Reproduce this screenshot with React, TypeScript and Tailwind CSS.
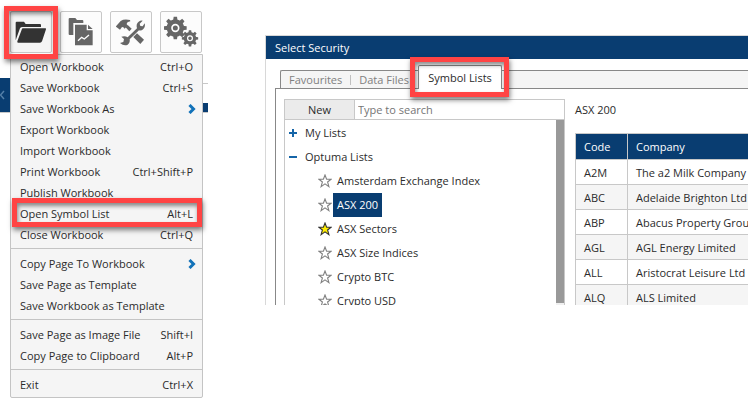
import { useState } from 'react'
import type { ReactNode } from 'react'

interface MenuEntry {
  label: string
  shortcut?: string
  submenu?: boolean
  marked?: boolean
}

const menuGroups: MenuEntry[][] = [
  [
    { label: 'Open Workbook', shortcut: 'Ctrl+O' },
    { label: 'Save Workbook', shortcut: 'Ctrl+S' },
    { label: 'Save Workbook As', submenu: true },
    { label: 'Export Workbook' },
    { label: 'Import Workbook' },
    { label: 'Print Workbook', shortcut: 'Ctrl+Shift+P' },
    { label: 'Publish Workbook' },
    { label: 'Open Symbol List', shortcut: 'Alt+L', marked: true },
    { label: 'Close Workbook', shortcut: 'Ctrl+Q' },
  ],
  [
    { label: 'Copy Page To Workbook', submenu: true },
    { label: 'Save Page as Template' },
    { label: 'Save Workbook as Template' },
  ],
  [
    { label: 'Save Page as Image File', shortcut: 'Shift+I' },
    { label: 'Copy Page to Clipboard', shortcut: 'Alt+P' },
  ],
  [{ label: 'Exit', shortcut: 'Ctrl+X' }],
]

const symbolLists = [
  { name: 'Amsterdam Exchange Index', starred: false },
  { name: 'ASX 200', starred: false },
  { name: 'ASX Sectors', starred: true },
  { name: 'ASX Size Indices', starred: false },
  { name: 'Crypto BTC', starred: false },
  { name: 'Crypto USD', starred: false },
]

const securities = [
  ['A2M', 'The a2 Milk Company'],
  ['ABC', 'Adelaide Brighton Ltd'],
  ['ABP', 'Abacus Property Group'],
  ['AGL', 'AGL Energy Limited'],
  ['ALL', 'Aristocrat Leisure Ltd'],
  ['ALQ', 'ALS Limited'],
]

// Red callout frame, placed over whatever it points at
function Callout({ className }: { className: string }) {
  return (
    <span
      className={`pointer-events-none absolute z-20 border-5 border-[#ff4444] shadow-[1px_3px_5px_rgba(0,0,0,0.5),inset_1px_3px_4px_rgba(0,0,0,0.45)] ${className}`}
    />
  )
}

function FolderIcon() {
  return (
    <svg viewBox="3 3 120 120" className="size-10" fill="#333">
      <path d="M17 35Q17 32 20 32H42L47 39H90Q93 39 93 42V48H38Q32 48 30 52L17 88Z" />
      <path d="M39 52H106Q109 52 108 55L96 91Q94 95 90 95H24Q21 95 22 91L35 56Q36 52 39 52Z" />
    </svg>
  )
}

function PagesIcon() {
  return (
    <svg viewBox="3 3 120 120" className="size-10" fill="#666">
      <path d="M26 24Q26 21 29 21H46L51 27H67Q70 27 70 30V36H40V72H29Q26 72 26 69Z" />
      <path d="M45 41H80V58H98V103H45Z" />
      <path d="M84 41L98 54H84Z" />
      <path d="M54 89L65 79L73 84L87 72" fill="none" stroke="#fff" strokeWidth="4" />
    </svg>
  )
}

function ToolsIcon() {
  return (
    <svg viewBox="3 3 120 120" className="size-10" fill="#666">
      <path d="M18 46L32 30Q42 23 60 27L61 31Q50 33 50 40L53 43L44 53L40 49L36 48L30 56L18 47Z" />
      <path d="M46 48L53 42L65 53L58 61Z" />
      <path d="M70 78L81 67L102 86L91 99Z" />
      <path d="M30 96L40 93L42 84L34 77Q45 73 53 79L81 52Q77 39 86 32Q92 27 98 29L89 38L91 45L98 46L104 37Q107 47 100 54Q94 60 87 58L59 85Q61 95 53 101Q42 106 30 96Z" />
    </svg>
  )
}

function Gear({ x, y, scale }: { x: number; y: number; scale: number }) {
  return (
    <g transform={`translate(${x} ${y}) scale(${scale})`}>
      {[0, 45, 90, 135, 180, 225, 270, 315].map((angle) => (
        <path key={angle} d="M-7 -20L-5 -34H5L7 -20Z" transform={`rotate(${angle})`} />
      ))}
      <circle r="26" />
      <circle r="10" fill="#666" stroke="#fff" strokeWidth="5" />
    </g>
  )
}

function GearsIcon() {
  return (
    <svg viewBox="3 3 120 120" className="size-10" fill="#666">
      <Gear x={46} y={51} scale={1} />
      <Gear x={90} y={82} scale={0.72} />
    </svg>
  )
}

function StarIcon({ filled }: { filled: boolean }) {
  return (
    <svg viewBox="0 0 14 14" className="size-3.5 shrink-0">
      <path
        d="M7 1L8.6 5.2H13.1L9.6 8L10.9 12.6L7 9.9L3.1 12.6L4.4 8L0.9 5.2H5.4Z"
        fill={filled ? '#ffee00' : '#fff'}
        stroke={filled ? '#333' : '#808080'}
        strokeWidth="1.1"
      />
    </svg>
  )
}

function ToolButton({ label, active, children }: { label: string; active?: boolean; children: ReactNode }) {
  return (
    <span className="relative">
      <button
        aria-label={label}
        className={`block rounded-[2px] border border-[#c8c8c8] ${
          active ? 'bg-[#f5f5f5]' : 'bg-[#fcfcfc]'
        }`}
      >
        {children}
      </button>
      {active && <Callout className="-top-[5px] -right-[6px] -bottom-[6px] -left-[6px]" />}
    </span>
  )
}

function FileMenu() {
  return (
    <div
      role="menu"
      className="absolute top-[54px] right-[5px] left-[10px] rounded-b-[2px] border border-[#c4c4c4] bg-[#f5f5f5] pt-px pb-0.5"
    >
      {menuGroups.map((group, index) => (
        <div key={index} className={index > 0 ? 'mt-[3px] border-t border-[#c4c4c4] pt-1' : ''}>
          {group.map((entry) => (
            <div key={entry.label} className="relative">
              <button
                role="menuitem"
                className="flex h-[21px] w-full items-center justify-between px-[9px] whitespace-nowrap"
              >
                <span>{entry.label}</span>
                {entry.shortcut && <span>{entry.shortcut}</span>}
                {entry.submenu && (
                  <svg viewBox="0 0 8 10" className="-mr-[3px] h-2.5 w-2" fill="none">
                    <path d="M1.5 1L5.5 5L1.5 9" stroke="#1272b9" strokeWidth="3" />
                  </svg>
                )}
              </button>
              {entry.marked && <Callout className="-top-[5px] right-0 -bottom-[3px] left-px" />}
            </div>
          ))}
        </div>
      ))}
    </div>
  )
}

function SymbolTree() {
  const [selected, setSelected] = useState('ASX 200')

  return (
    <div className="flex w-[281px] shrink-0 flex-col border-x border-t border-[#c8c8c8]">
      <div className="flex h-5 shrink-0 border-b border-[#c8c8c8]">
        <button className="w-[70px] shrink-0 border-r border-[#c8c8c8] bg-[#ebebeb]">New</button>
        <input
          aria-label="Type to search"
          placeholder="Type to search"
          className="min-w-0 flex-1 px-[3px] outline-none placeholder:text-[#757575]"
        />
      </div>
      <div className="flex min-h-0 flex-1">
        <div className="flex-1 pt-px">
          <button className="flex h-6 items-center gap-2 pl-1">
            <svg viewBox="0 0 8 8" className="size-2">
              <path d="M4 0V8M0 4H8" stroke="#1565a8" strokeWidth="2" />
            </svg>
            My Lists
          </button>
          <button className="flex h-6 items-center gap-2 pl-1">
            <svg viewBox="0 0 8 8" className="size-2">
              <path d="M0 4H8" stroke="#1565a8" strokeWidth="2" />
            </svg>
            Optuma Lists
          </button>
          {symbolLists.map((list) => (
            <button
              key={list.name}
              onClick={() => setSelected(list.name)}
              className="flex h-6 items-center pl-[33px]"
            >
              <StarIcon filled={list.starred} />
              <span
                className={`ml-px flex h-6 items-center px-1 ${
                  selected === list.name ? 'bg-[#093d71] text-white' : ''
                }`}
              >
                {list.name}
              </span>
            </button>
          ))}
        </div>
        <div className="w-2 bg-[#f0f0f0] pb-0.5">
          <div className="h-full bg-[#999]" />
        </div>
      </div>
    </div>
  )
}

function SecurityTable() {
  return (
    <div className="min-w-0 flex-1 pl-2.5">
      <h2 className="flex h-[22px] items-center">ASX 200</h2>
      <table className="mt-3 w-[240px] border-collapse text-left whitespace-nowrap">
        <thead>
          <tr className="h-[26px] bg-[#093d71] text-white">
            <th className="w-[52px] border border-[#c8c8c8] px-2 py-0 font-normal">Code</th>
            <th className="border border-[#c8c8c8] px-2 py-0 font-normal">Company</th>
          </tr>
        </thead>
        <tbody>
          {securities.map(([code, company]) => (
            <tr key={code} className="h-[25px] even:bg-[#f5f5f5]">
              <td className="border border-[#c8c8c8] px-2 pt-0.5 pb-0">{code}</td>
              <td className="border border-[#c8c8c8] px-2 pt-0.5 pb-0">{company}</td>
            </tr>
          ))}
        </tbody>
      </table>
    </div>
  )
}

export default function App() {
  return (
    <div className="flex items-start overflow-hidden bg-white font-['Open_Sans','Noto_Sans',sans-serif] text-[11px] leading-4 text-[#2b2b2b]">
      <aside className="relative min-h-[401px] w-[208px] shrink-0 pt-[11px]">
        <div className="flex gap-2 pl-2.5">
          <ToolButton label="File" active>
            <FolderIcon />
          </ToolButton>
          <ToolButton label="Pages">
            <PagesIcon />
          </ToolButton>
          <ToolButton label="Tools">
            <ToolsIcon />
          </ToolButton>
          <ToolButton label="Settings">
            <GearsIcon />
          </ToolButton>
        </div>
        {/* page strip that shows on either side of the open menu */}
        <div className="mt-[25px] flex h-[35px] border-b border-[#c8c8c8]">
          <div className="flex w-10 items-center bg-[#093d71]">
            <svg viewBox="0 0 5 10" className="h-2.5 w-[5px]" fill="none">
              <path d="M4 1L0.5 5L4 9" stroke="#5580a8" strokeWidth="1.5" />
            </svg>
          </div>
          <div className="flex flex-1 flex-col pt-[5px]">
            <div className="h-5 border-t border-[#c8c8c8]" />
            <div className="flex-1 bg-[#093d71]" />
          </div>
        </div>
        <FileMenu />
      </aside>

      <main className="mt-[35px] ml-[57px] flex h-[270px] min-w-0 flex-1 flex-col overflow-hidden border-t border-l border-[#d8d8d8]">
        <h1 className="flex h-[23px] shrink-0 items-center bg-[#093d71] pl-[9px] text-white">Select Security</h1>
        <div className="flex shrink-0 items-end pt-1.5 pl-[9px]">
          <div className="w-[5px] border-b border-[#888]" />
          <div role="tablist" className="flex flex-1 items-end">
            <div className="flex h-[19px] w-[138px] shrink-0 items-center rounded-tl-[2px] border-t border-b border-l border-[#888] bg-[#f5f5f5] pl-2 text-[#808080]">
              <button role="tab">Favourites</button>
              <span className="mx-2 h-2.5 w-px bg-[#c0c0c0]" />
              <button role="tab" className="whitespace-nowrap">Data Files</button>
            </div>
            <div className="relative">
              <button
                role="tab"
                aria-selected="true"
                className="flex h-6 w-[84px] items-center justify-center rounded-t-[2px] border-x border-t border-[#888] bg-white"
              >
                Symbol Lists
              </button>
              <Callout className="-top-2 -right-[7px] -bottom-2 -left-2" />
            </div>
            <div className="h-[19px] flex-1 border-y border-[#888] bg-[#f5f5f5]" />
          </div>
        </div>
        <div className="ml-[9px] flex min-h-0 flex-1 border-l border-[#888] pt-2.5 pl-2">
          <SymbolTree />
          <SecurityTable />
        </div>
      </main>
    </div>
  )
}
